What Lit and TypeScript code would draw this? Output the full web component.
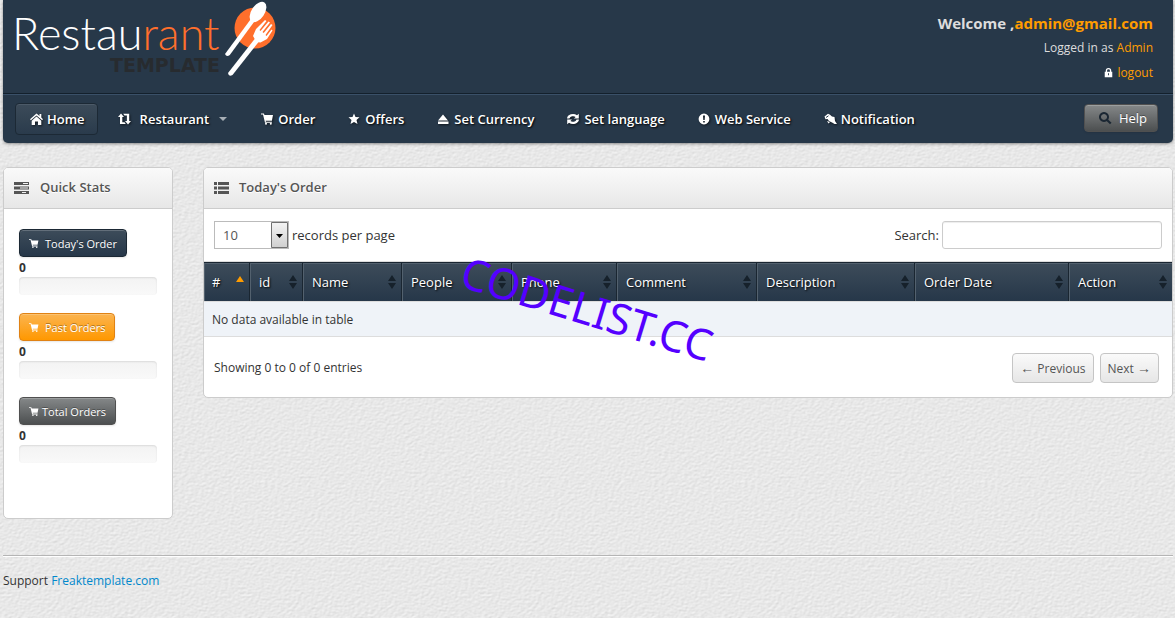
import { LitElement, html, css, svg, nothing } from "lit";
import { customElement } from "lit/decorators.js";

const icons: Record<string, unknown> = {
  home: svg`<path d="M6.500 1.400 9.500 4V2h1.800v3.600l1.700 1.700-.9 1L6.500 3.400.9 8.300l-.9-1z"/><path d="M6.500 4.500 11.300 8.700V13H8V9.500H5V13H1.700V8.700z"/>`,
  retweet: svg`<path d="M3 1.500 6 5H4.300v5.200H6.500l1.300 1.800H2V5H0zM5.200 1.800h6V9H13l-3 3.500L7 9h1.900V3.600H6.500z"/>`,
  cart: svg`<path d="M0 1.500h2.900l.6 1.600H12L10.900 8.700H4.700l.2 1h6v1H4L2 2.600H0z"/><circle cx="5" cy="11.800" r="1"/><circle cx="9.800" cy="11.800" r="1"/>`,
  star: svg`<path d="M6 1.500 7.500 5 11.500 5.300 8.500 8 9.500 12 6 9.900 2.500 12 3.500 8 .5 5.300 4.500 5z"/>`,
  eject: svg`<path d="M6 2.500 11 8.500H1zM1 9.500h10.500v2.500H1z"/>`,
  refresh: svg`<path d="M0 6.500A6 5 0 0 1 10 3.300L11.800 1.800V6.500H7L8.600 4.900A4 3.600 0 0 0 2.400 6.500zM12 7.500A6 5 0 0 1 2 10.700L.2 12.200V7.500H5L3.400 9.100A4 3.600 0 0 0 9.600 7.500z"/>`,
  warn: svg`<path fill-rule="evenodd" d="M6 1.600a5.400 5.400 0 1 1 0 10.800A5.400 5.400 0 0 1 6 1.600zM5 3.500l.3 4.400h1.400L7 3.500zM5.200 8.900v1.600h1.600V8.900z"/>`,
  bell: svg`<path d="M.5 4.500 4 1.800 6 2.800 8 4.500 10.500 5 11 9 13 12H10.500L8.500 10.700 5 9 3.500 7 1.500 7.300z"/><path d="M3 9 6 10 4.500 11.500z"/><path d="M2 5.500 4.500 3.800" stroke="#273849"/>`,
  lock: svg`<path fill-rule="evenodd" d="M3.500 6V4.800a3.500 3.500 0 0 1 7 0V6h1.300v7H2.200V6zM5.200 6h3.600V4.800a1.800 1.800 0 0 0-3.600 0zM6.400 8v2.500h1.200V8z"/>`,
  search: svg`<path fill-rule="evenodd" d="M6 1a5 5 0 1 1-.01 0zM6 3a3 3 0 1 0 .01 0z"/><path d="m8.300 9.800 1.500-1.500L13.500 11.800 12 13.300z"/>`,
  tasks: svg`<path fill-rule="evenodd" d="M0 1h15v3H0zM9 2v1h5V2zM0 5.500h15v3H0zM6 6.500v1h8v-1zM0 10h15v3H0zM8 11v1h4v-1z"/>`,
  list: svg`<path d="M0 1h3v3H0zM4 1h11v3H4zM0 5.500h3v3H0zM4 5.500h11v3H4zM0 10h3v3H0zM4 10h11v3H4z"/>`,
};

const icon = (name: string, width = 14) => html`<svg
  class="icon" width=${width} height="14" viewBox="0 0 ${width} 14" aria-hidden="true"
>${icons[name]}</svg>`;

@customElement("app-root")
export class AppRoot extends LitElement {
  static styles = css`
    * { box-sizing: border-box; }
    :host {
      display: block;
      position: relative;
      min-height: 100vh;
      padding: 0 2px 0 3px;
      color: #333;
      font: 13px/20px "Open Sans", "Noto Sans", sans-serif;
      background-color: #e9e9e9;
      background-image: url("data:image/svg+xml,%3Csvg xmlns='http://www.w3.org/2000/svg' width='240' height='240'%3E%3Cfilter id='p' x='0' y='0' width='100%25' height='100%25' color-interpolation-filters='sRGB'%3E%3CfeTurbulence type='fractalNoise' baseFrequency='.3 .45' numOctaves='3' seed='4' stitchTiles='stitch'/%3E%3CfeDiffuseLighting lighting-color='white' surfaceScale='.2' diffuseConstant='1.05'%3E%3CfeDistantLight azimuth='235' elevation='60'/%3E%3C/feDiffuseLighting%3E%3C/filter%3E%3Crect width='240' height='240' filter='url(%23p)'/%3E%3C/svg%3E");
    }
    a { color: #0088cc; text-decoration: none; }
    button, select, input { font: inherit; }
    .icon { flex: none; fill: currentColor; }

    .top {
      border-radius: 0 0 5px 5px;
      background: #273849;
      color: #ddd;
      box-shadow: 0 1px 3px rgba(0, 0, 0, .4);
    }
    .brandbar {
      display: flex;
      justify-content: space-between;
      height: 93px;
      padding: 0 20px 0 10px;
    }
    .account {
      display: flex;
      flex-direction: column;
      gap: 5px;
      padding-top: 13px;
      font-size: 12px;
      text-align: right;
    }
    .account a { color: #ff9c00; }
    .welcome { margin: 0; font-size: 15px; line-height: 20px; font-weight: 700; }
    .account .icon { width: 11px; height: 11px; color: #fff; vertical-align: -1px; }

    .nav {
      display: flex;
      justify-content: space-between;
      align-items: flex-start;
      height: 50px;
      padding: 9px 15px 0 12px;
      border-top: 1px solid #13202c;
      box-shadow: inset 0 1px #3a5068;
    }
    .links { display: flex; gap: 3px; }
    .item {
      display: flex;
      align-items: center;
      gap: 3px;
      height: 32px;
      padding: 0 14px;
      border: 1px solid transparent;
      border-radius: 4px;
      color: #fff;
      font-weight: 600;
      white-space: nowrap;
      text-shadow: 1px 1px 2px #000;
    }
    .item .icon { filter: drop-shadow(1px 1px 1px rgba(0, 0, 0, .6)); }
    .item.wide { gap: 8px; margin-right: 1px; }
    .item.active {
      margin-right: 2px;
      padding-right: 12px;
      border-color: #1c2935;
      background: linear-gradient(#3c4b59, #2a3b4c);
      box-shadow: inset 0 1px #4c5a68;
    }
    .caret {
      margin-left: 2px;
      border: 4px solid transparent;
      border-top-color: #a8afb6;
      border-bottom: 0;
    }
    .btn {
      display: inline-flex;
      align-items: center;
      gap: 5px;
      height: 28px;
      padding: 1px 9px 0;
      border: 1px solid;
      border-radius: 4px;
      color: #fff;
      font-size: 11px;
      line-height: 18px;
      text-shadow: 0 -1px rgba(0, 0, 0, .35);
      box-shadow: inset 0 1px rgba(255, 255, 255, .2), 0 1px 2px rgba(0, 0, 0, .1);
    }
    .btn .icon { width: 11px; height: 11px; }
    .btn.navy { background: linear-gradient(#3d4c5a, #263749); border-color: #1b2834; }
    .btn.orange { background: linear-gradient(#fbb450, #ff9800); border-color: #e08214; }
    .btn.grey { background: linear-gradient(#858889, #4c4f50); border-color: #505050; }
    .btn.tight { gap: 2px; }
    .btn.help { margin-top: 1px; font-size: 13px; gap: 7px; padding: 0 10px 0 13px; }
    .btn.help .icon { width: 14px; height: 14px; color: #1b2733; }

    .columns {
      display: grid;
      grid-template-columns: 170px minmax(0, 1fr);
      align-items: start;
      gap: 30px;
      margin-top: 24px;
    }
    .card {
      border: 1px solid #ccc;
      border-radius: 5px;
      background: #fff;
      overflow: hidden;
    }
    .card-head {
      display: flex;
      align-items: center;
      gap: 10px;
      height: 41px;
      padding: 0 10px;
      border-bottom: 1px solid #ccc;
      background: linear-gradient(#fafafa, #e7e7e7);
      color: #555;
      text-shadow: 0 1px #fff;
    }
    .card-head h2 { margin: 0; padding-bottom: 2px; font-size: 13px; font-weight: 600; }
    .stats { display: grid; gap: 18px; padding: 20px 15px 55px; }
    .count { display: block; padding-top: 2px; font-weight: 700; font-size: 12px; line-height: 18px; }
    .bar {
      height: 18px;
      border-radius: 4px;
      background: linear-gradient(#f3f3f3, #f9f9f9);
      box-shadow: inset 0 1px 2px rgba(0, 0, 0, .1);
    }

    .tools {
      display: flex;
      justify-content: space-between;
      height: 53px;
      padding: 12px 10px 0 10px;
      border-bottom: 1px solid #ddd;
    }
    .tools label { display: flex; align-items: center; gap: 3px; height: 28px; }
    .length {
      width: 75px;
      height: 28px;
      padding: 0 8px;
      border: 1px solid #bbb;
      border-radius: 0;
      color: #555;
      appearance: none;
      background:
        url("data:image/svg+xml,%3Csvg xmlns='http://www.w3.org/2000/svg' width='17' height='26'%3E%3ClinearGradient id='g' x2='0' y2='1'%3E%3Cstop stop-color='%23f4f4f4'/%3E%3Cstop offset='1' stop-color='%23cfcfcf'/%3E%3C/linearGradient%3E%3Cpath d='M.5.5h16v25H.5z' fill='url(%23g)' stroke='%23707070'/%3E%3Cpath d='M5 12h7l-3.500 4z'/%3E%3C/svg%3E")
        right center no-repeat #fff;
    }
    .search {
      width: 220px;
      height: 28px;
      padding: 4px 6px;
      border: 1px solid #ccc;
      border-radius: 3px;
      background: #fff;
      box-shadow: inset 0 1px 1px rgba(0, 0, 0, .075);
    }
    .grid { width: 100%; table-layout: fixed; border-collapse: separate; border-spacing: 0; }
    .grid th {
      height: 39px;
      padding: 0 5px 0 9px;
      border-right: 1px solid #1a2631;
      border-top: 1px solid #1a2631;
      background: linear-gradient(#3d4c5a, #263749);
      box-shadow: inset 1px 1px #53616e;
      color: #fff;
      font-weight: 400;
      text-align: left;
      text-shadow: 1px 1px 2px #000;
    }
    .grid th:first-child { padding-left: 8px; }
    .grid th:last-child { border-right: 0; }
    .head { display: flex; align-items: center; justify-content: space-between; }
    .sort { flex: none; fill: #16212b; }
    .sort.asc { fill: #ff9c00; }
    .grid td {
      height: 36px;
      padding: 2px 8px 0;
      border: solid #ddd;
      border-width: 1px 0;
      background: #eff3f8;
      font-size: 12px;
    }
    .foot {
      display: flex;
      justify-content: space-between;
      align-items: flex-start;
      padding: 16px 13px 14px 10px;
      font-size: 12px;
      line-height: 30px;
    }
    .pager { display: flex; gap: 6px; }
    .page {
      height: 30px;
      padding: 1px 7px 0;
      border: 1px solid #c5c5c5;
      border-radius: 4px;
      background: linear-gradient(#fafafa, #e6e6e6);
      color: #555;
      font-size: 12px;
      line-height: 27px;
    }
    .arrow { font: 14px/14px "Liberation Sans", sans-serif; }
    .support {
      margin-top: 36px;
      padding-top: 15px;
      border-top: 1px solid #b5b5b5;
      box-shadow: inset 0 1px #fff;
      font-size: 12px;
    }
    .stamp {
      position: absolute;
      left: 458px;
      top: 243px;
      color: #5500ff;
      font: 43px/54px "Noto Sans", sans-serif;
      transform: rotate(17deg);
      transform-origin: 0 43px;
      pointer-events: none;
    }
    .logo { display: block; flex: none; overflow: visible; }
    .word { font: 300 45px Lato, sans-serif; fill: #fff; }
    .word .second { fill: #ff6f2c; }
    .tag { font: 700 19px "DejaVu Sans", sans-serif; fill: #272b2f; }
  `;

  private links = [
    { icon: "home", text: "Home", active: true },
    { icon: "retweet", text: "Restaurant", menu: true },
    { icon: "cart", text: "Order" },
    { icon: "star", text: "Offers" },
    { icon: "eject", text: "Set Currency" },
    { icon: "refresh", text: "Set language" },
    { icon: "warn", text: "Web Service" },
    { icon: "bell", text: "Notification" },
  ];

  private stats = [
    { text: "Today's Order", tone: "navy" },
    { text: "Past Orders", tone: "orange" },
    { text: "Total Orders", tone: "grey tight" },
  ];

  private headings: [string, number][] = [
    ["#", 46], ["id", 53], ["Name", 99], ["People", 110], ["Phone", 105],
    ["Comment", 140], ["Description", 158], ["Order Date", 154], ["Action", 103],
  ];

  private logo() {
    return html`<svg class="logo" width="270" height="80" viewBox="0 0 270 80" role="img" aria-label="Restaurant Template">
      <text class="word" x="-1" y="50">Restau<tspan class="second">rant</tspan></text>
      <text class="tag" x="97" y="72">TEMPLATE</text>
      <circle cx="242" cy="28" r="20.500" fill="#ff6f2c"/>
      <g fill="#fff">
        <ellipse cx="245" cy="12" rx="6.500" ry="11.500" transform="rotate(34 245 12)"/>
        <path d="M237.500 19.500 241 22 216.800 55Q213.500 57.500 212 54z"/>
        <path d="M242 38.500 246 41.500 219.500 75Q215.500 77 215 73z"/>
        <path d="M240 36 243 29 252 20 253.500 21 246.500 30 247.500 31 255.500 21.500 257 22.500 249.500 32 250.700 33 258 24 259.500 25 252.500 35 253.500 36 258.500 29.500 259.500 30.500 254 39 247.500 42.500 243.500 42z"/>
      </g>
    </svg>`;
  }

  render() {
    return html`
      <header class="top">
        <div class="brandbar">
          ${this.logo()}
          <div class="account">
            <p class="welcome">Welcome ,<a href="#">admin@gmail.com</a></p>
            <span>Logged in as <a href="#">Admin</a></span>
            <span>${icon("lock")} <a href="#">logout</a></span>
          </div>
        </div>
        <nav class="nav">
          <div class="links">
            ${this.links.map((l) => html`<a href="#" class="item ${l.active ? "active" : ""} ${l.menu ? "wide" : ""}"
              >${icon(l.icon)}<span>${l.text}</span>${l.menu ? html`<span class="caret"></span>` : nothing}</a>`)}
          </div>
          <button class="btn grey help">${icon("search")}Help</button>
        </nav>
      </header>

      <main class="columns">
        <section class="card">
          <div class="card-head">${icon("tasks", 16)}<h2>Quick Stats</h2></div>
          <div class="stats">
            ${this.stats.map((s) => html`<div>
              <button class="btn ${s.tone}">${icon("cart")}${s.text}</button>
              <span class="count">0</span>
              <div class="bar"></div>
            </div>`)}
          </div>
        </section>

        <section class="card">
          <div class="card-head">${icon("list", 15)}<h2>Today's Order</h2></div>
          <div class="tools">
            <label><select class="length"><option>10</option><option>25</option><option>50</option></select>records per page</label>
            <label>Search:<input class="search" type="text"></label>
          </div>
          <table class="grid">
            <colgroup>${this.headings.map(([, w]) => html`<col width=${w}>`)}</colgroup>
            <thead><tr>${this.headings.map(([name], i) => html`<th scope="col"><div class="head">${name}
              <svg class="sort ${i === 0 ? "asc" : ""}" width="8" height="14" viewBox="0 0 8 14" aria-hidden="true">
                ${i === 0 ? svg`<path d="M0 7 4 1 8 7z"/>` : svg`<path d="M0 6 4 0 8 6zM0 8h8l-4 6z"/>`}
              </svg></div></th>`)}</tr></thead>
            <tbody><tr><td colspan="9">No data available in table</td></tr></tbody>
          </table>
          <div class="foot">
            <span>Showing 0 to 0 of 0 entries</span>
            <div class="pager">
              <button class="page"><span class="arrow">←</span> Previous</button>
              <button class="page">Next <span class="arrow">→</span></button>
            </div>
          </div>
        </section>
      </main>

      <footer class="support">Support <a href="#">Freaktemplate.com</a></footer>
      <div class="stamp">CODELIST.CC</div>
    `;
  }
}
